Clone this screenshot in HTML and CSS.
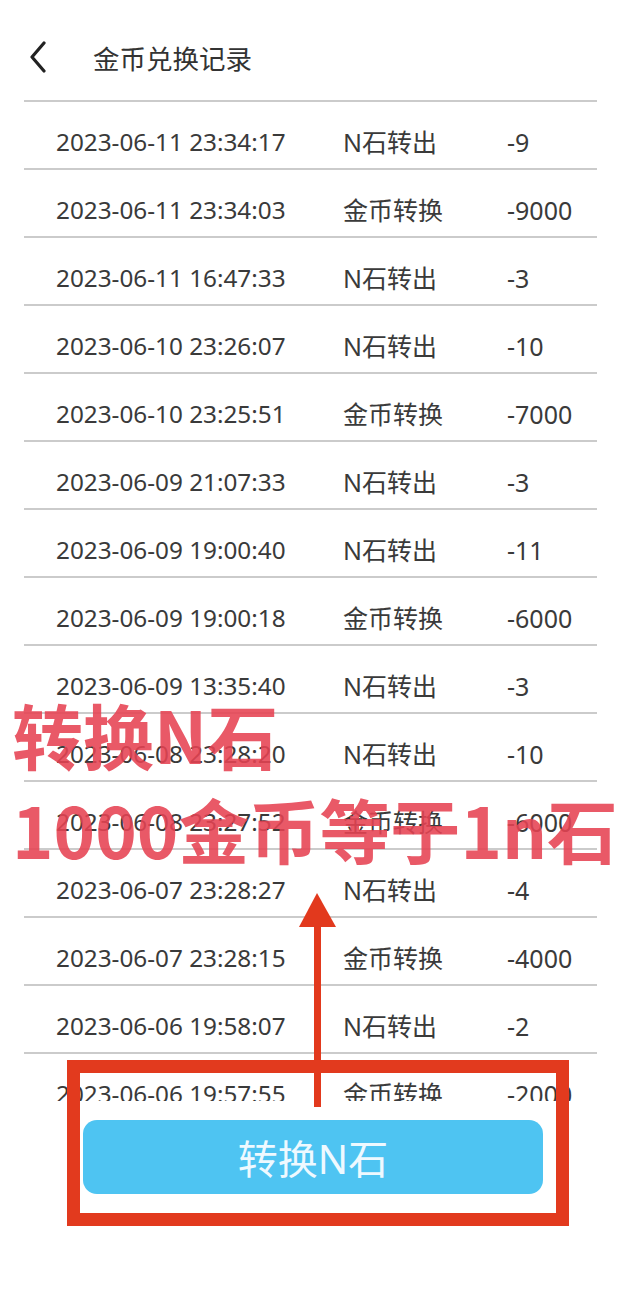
FILE: index.html
```html
<!DOCTYPE html>
<html lang="zh-CN">
<head>
  <meta charset="UTF-8" />
  <meta name="viewport" content="width=device-width, initial-scale=1.0"/>
  <title>金币兑换记录</title>
  <link rel="stylesheet" href="styles.css">
</head>
<body>
  <div class="screen">
    <div class="header">
      <a class="back" href="#">
        <svg width="20" height="32" viewBox="0 0 20 32"><path d="M16 2 L4 16 L16 30" fill="none" stroke="#222" stroke-width="3.2" stroke-linecap="round" stroke-linejoin="round"/></svg>
      </a>
      <div class="title">金币兑换记录</div>
    </div>

    <div class="records">
      <div class="row"><span class="date">2023-06-11 23:34:17</span><span>N石转出</span><span>-9</span></div>
      <div class="row"><span class="date">2023-06-11 23:34:03</span><span>金币转换</span><span>-9000</span></div>
      <div class="row"><span class="date">2023-06-11 16:47:33</span><span>N石转出</span><span>-3</span></div>
      <div class="row"><span class="date">2023-06-10 23:26:07</span><span>N石转出</span><span>-10</span></div>
      <div class="row"><span class="date">2023-06-10 23:25:51</span><span>金币转换</span><span>-7000</span></div>
      <div class="row"><span class="date">2023-06-09 21:07:33</span><span>N石转出</span><span>-3</span></div>
      <div class="row"><span class="date">2023-06-09 19:00:40</span><span>N石转出</span><span>-11</span></div>
      <div class="row"><span class="date">2023-06-09 19:00:18</span><span>金币转换</span><span>-6000</span></div>
      <div class="row"><span class="date">2023-06-09 13:35:40</span><span>N石转出</span><span>-3</span></div>
      <div class="row"><span class="date">2023-06-08 23:28:20</span><span>N石转出</span><span>-10</span></div>
      <div class="row"><span class="date">2023-06-08 23:27:52</span><span>金币转换</span><span>-6000</span></div>
      <div class="row"><span class="date">2023-06-07 23:28:27</span><span>N石转出</span><span>-4</span></div>
      <div class="row"><span class="date">2023-06-07 23:28:15</span><span>金币转换</span><span>-4000</span></div>
      <div class="row"><span class="date">2023-06-06 19:58:07</span><span>N石转出</span><span>-2</span></div>
      <div class="row"><span class="date">2023-06-06 19:57:55</span><span>金币转换</span><span>-2000</span></div>
    </div>

    <div class="footer">
      <button class="convert">转换N石</button>
    </div>

    <!-- annotations drawn over the screenshot -->
    <div class="note note-1">转换N石</div>
    <div class="note note-2">1000金币等于1n石</div>
    <svg class="arrow" width="42" height="216" viewBox="0 0 42 216">
      <polygon points="3,34 40,34 21,0" fill="#e2391d"/>
      <rect x="18" y="30" width="7" height="184" fill="#e2391d"/>
    </svg>
    <div class="mark"></div>
  </div>
</body>
</html>
```

FILE: styles.css
```css
body {
  margin: 0;
  background: #fff;
  font-family: 'Noto Sans', 'Noto Sans CJK SC', sans-serif;
  color: #3a3a3a;
}
.screen {
  position: relative;
  width: 631px;
  height: 1295px;
  overflow: hidden;
}
.header {
  height: 100px;
  display: flex;
  align-items: center;
  padding-left: 28px;
}
.back {
  display: flex;
  width: 20px;
  height: 32px;
  margin-top: 14px;
}
.title {
  margin-left: 45px;
  margin-top: 14px;
  font-family: 'Noto Sans CJK SC', sans-serif;
  font-size: 26.5px;
  color: #333;
}
.records {
  margin: 0 34px 0 24px;
  height: 1001px;
  overflow: hidden;
}
.row {
  box-sizing: border-box;
  height: 68px;
  border-top: 2px solid #cbcbcb;
  padding: 25px 0 0 32px;
  display: grid;
  grid-template-columns: 287px 164px 1fr;
  font-size: 25px;
  line-height: 30px;
}
.date {
  font-size: 24.3px;
}
.footer {
  padding: 19px 0 0 83px;
}
.convert {
  width: 460px;
  height: 74px;
  border: none;
  border-radius: 14px;
  background: #4ec4f2;
  color: #eef9ff;
  font-family: 'Noto Sans', 'Noto Sans CJK SC', sans-serif;
  font-size: 40px;
  padding: 0;
}
.note {
  position: absolute;
  left: 12px;
  font-family: 'Noto Sans CJK SC', sans-serif;
  font-weight: 700;
  line-height: 1;
  color: rgba(230, 66, 82, 0.88);
  white-space: nowrap;
}
.note-1 {
  top: 698px;
  font-size: 71px;
}
.note-2 {
  top: 793px;
  font-size: 70.5px;
}
.arrow {
  position: absolute;
  left: 296px;
  top: 893px;
}
.mark {
  position: absolute;
  left: 67px;
  top: 1060px;
  width: 502px;
  height: 166px;
  box-sizing: border-box;
  border: 13px solid #e23a1e;
}
```
